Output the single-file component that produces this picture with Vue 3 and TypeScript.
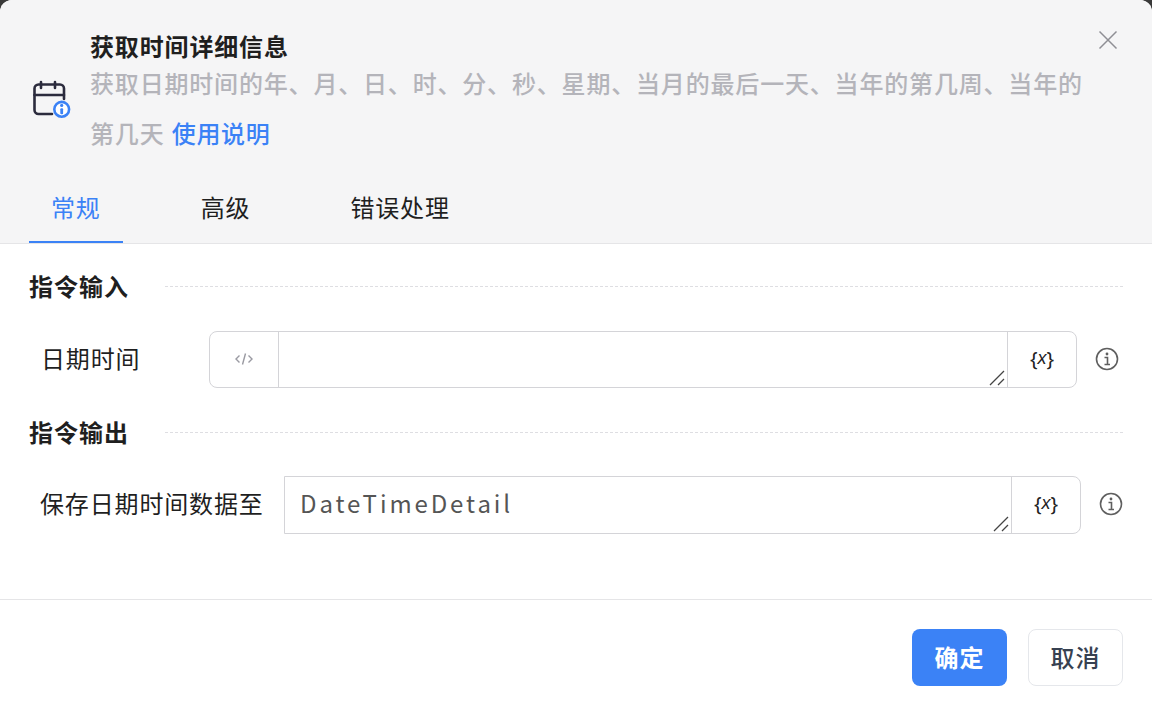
<script setup lang="ts">
const tabs: string[] = ['常规', '高级', '错误处理']
</script>

<template>
  <div class="dialog">
    <header class="head">
      <div class="intro">
        <svg class="cal" width="40" height="40" viewBox="0 0 40 40" fill="none">
          <path d="M21 34H7.500a4 4 0 0 1-4-4V8.500a4 4 0 0 1 4-4H29a4 4 0 0 1 4 4V19" stroke="#2b2b3d" stroke-width="2.600" stroke-linecap="round" />
          <path d="M3.500 15H33M10 2v6M24 2v6" stroke="#2b2b3d" stroke-width="2.600" stroke-linecap="round" />
          <circle cx="30.700" cy="29.300" r="7.400" fill="#fff" stroke="#3b82f6" stroke-width="2.600" />
          <rect x="29.300" y="28.300" width="2.800" height="6" rx="1" fill="#3b82f6" />
          <circle cx="30.700" cy="25.400" r="1.600" fill="#3b82f6" />
        </svg>
        <div class="texts">
          <h1 class="title">获取时间详细信息</h1>
          <p class="desc">获取日期时间的年、月、日、时、分、秒、星期、当月的最后一天、当年的第几周、当年的第几天 <span class="link">使用说明</span></p>
        </div>
        <svg class="close" width="20" height="20" viewBox="0 0 20 20" fill="none">
          <path d="M1.500 1.500l17 17M18.500 1.500l-17 17" stroke="#8f8f94" stroke-width="1.500" />
        </svg>
      </div>
      <nav class="tabs">
        <div v-for="(t, i) in tabs" :key="t" class="tab" :class="{ on: i === 0 }">{{ t }}</div>
      </nav>
    </header>

    <main class="body">
      <div class="sec"><span>指令输入</span><i class="dash"></i></div>
      <div class="row row1">
        <label class="lbl l1">日期时间</label>
        <div class="box b1">
          <div class="pre">
            <svg width="18" height="14" viewBox="0 0 18 14" fill="none">
              <path d="M4.500 3.500L1 7l3.500 3.500M13.500 3.500L17 7l-3.500 3.500M10.500 1.500l-3 11" stroke="#9a9aa2" stroke-width="1.400" />
            </svg>
          </div>
          <div class="field"></div>
          <svg class="grip" width="16" height="16" viewBox="0 0 16 16" fill="none"><path d="M1 15L15 1M9 15l6-6" stroke="#444" stroke-width="1.300" /></svg>
          <div class="suf"><span class="brace">{</span><em>x</em><span class="brace">}</span></div>
        </div>
        <svg class="info" width="24" height="24" viewBox="0 0 24 24" fill="none">
          <circle cx="12" cy="12" r="10.500" stroke="#5f5f5f" stroke-width="1.600" />
          <path d="M9.500 10.500H12.500V17M9.500 17.500H15" stroke="#5f5f5f" stroke-width="1.600" />
          <circle cx="12" cy="7" r="1.400" fill="#5f5f5f" />
        </svg>
      </div>

      <div class="sec sec2"><span>指令输出</span><i class="dash"></i></div>
      <div class="row row2">
        <label class="lbl l2">保存日期时间数据至</label>
        <div class="box b2">
          <div class="field val">DateTimeDetail</div>
          <svg class="grip" width="16" height="16" viewBox="0 0 16 16" fill="none"><path d="M1 15L15 1M9 15l6-6" stroke="#444" stroke-width="1.300" /></svg>
          <div class="suf"><span class="brace">{</span><em>x</em><span class="brace">}</span></div>
        </div>
        <svg class="info" width="24" height="24" viewBox="0 0 24 24" fill="none">
          <circle cx="12" cy="12" r="10.500" stroke="#5f5f5f" stroke-width="1.600" />
          <path d="M9.500 10.500H12.500V17M9.500 17.500H15" stroke="#5f5f5f" stroke-width="1.600" />
          <circle cx="12" cy="7" r="1.400" fill="#5f5f5f" />
        </svg>
      </div>
    </main>

    <footer class="foot">
      <button class="btn ok">确定</button>
      <button class="btn no">取消</button>
    </footer>
  </div>
</template>

<style>
html, body { margin: 0; background: #3a3a3a; }
</style>

<style scoped>
.dialog {
  width: 1152px;
  height: 714px;
  background: #fff;
  border-radius: 12px 12px 0 0;
  overflow: hidden;
  display: flex;
  flex-direction: column;
  font-family: "Noto Sans CJK SC", "Noto Sans", sans-serif;
  font-size: 24px;
  letter-spacing: .85px;
  color: #1f1f1f;
}
.head {
  height: 244px;
  box-sizing: border-box;
  background: #f5f5f6;
  border-bottom: 1px solid #e5e5e7;
  display: flex;
  flex-direction: column;
  padding: 0 29px;
}
.intro { position: relative; display: flex; align-items: center; height: 170px; }
.cal { flex: none; margin-left: 2px; margin-top: 30px; }
.texts { margin-left: 19px; width: 1000px; padding-top: 24px; }
.title { margin: -1px 0 1px; font-size: 24px; line-height: 22px; font-weight: 700; color: #1f1f1f; }
.desc { margin: 0; font-size: 24px; line-height: 50px; font-weight: 500; letter-spacing: .82px; color: #b4b4ba; }
.link { color: #3b82f6; font-weight: 500; letter-spacing: .7px; margin-left: 1px; }
.close { position: absolute; right: 5px; top: 30px; }
.tabs { display: flex; gap: 56px; height: 74px; }
.tab { padding: 0 22px; line-height: 76px; height: 74px; box-sizing: border-box; }
.tab.on { color: #3b82f6; border-bottom: 2px solid #3b82f6; }
.body { flex: 1; padding: 0 29px; }
.sec { display: flex; align-items: center; gap: 36px; height: 36px; margin-top: 24px; font-weight: 700; line-height: 36px; letter-spacing: 1px; }
.sec2 { margin-top: 26px; }
.dash { flex: 1; border-top: 1px dashed #dedee2; }
.row { display: flex; align-items: center; }
.row1 { margin-top: 27px; height: 57px; }
.row2 { margin-top: 26px; height: 58px; }
.lbl { flex: none; line-height: 36px; padding-bottom: 4px; }
.l1 { width: 180px; padding-left: 12px; box-sizing: border-box; }
.l2 { width: 255px; padding-left: 11px; box-sizing: border-box; }
.box {
  position: relative;
  display: flex;
  flex: none;
  height: 100%;
  box-sizing: border-box;
  border: 1px solid #d4d4d8;
  border-radius: 8px;
  background: #fff;
}
.b1 { width: 868px; }
.b2 { width: 797px; border-radius: 0 8px 8px 0; }
.pre { width: 69px; border-right: 1px solid #d4d4d8; display: flex; align-items: center; justify-content: center; padding-bottom: 1px; box-sizing: border-box; }
.field { flex: 1; }
.val { padding-left: 15px; line-height: 52px; letter-spacing: 2.900px; color: #555; }
.suf {
  width: 69px;
  border-left: 1px solid #d4d4d8;
  display: flex;
  align-items: center;
  justify-content: center;
  font-family: "Noto Sans", sans-serif;
  font-size: 20px;
  letter-spacing: 0;
  padding-bottom: 3px;
  box-sizing: border-box;
  color: #222;
}
.suf em { margin: 0; font-family: "Liberation Sans", sans-serif; font-size: 18px; }
.grip { position: absolute; right: 71px; bottom: 1px; }
.info { flex: none; margin-left: 18px; margin-bottom: 2px; }
.row2 .info { margin-bottom: 3px; }
.foot {
  height: 115px;
  box-sizing: border-box;
  border-top: 1px solid #e5e5e7;
  display: flex;
  justify-content: flex-end;
  gap: 21px;
  padding: 29px 29px 0;
}
.btn {
  width: 95px;
  height: 57px;
  box-sizing: border-box;
  border-radius: 8px;
  font-family: inherit;
  font-size: 24px;
  font-weight: 500;
  letter-spacing: 1px;
  padding: 0 0 3px;
}
.ok { background: #3b82f6; border: 0; color: #fff; font-weight: 700; }
.no { background: #fff; border: 1px solid #e5e7eb; color: #374151; }
</style>
